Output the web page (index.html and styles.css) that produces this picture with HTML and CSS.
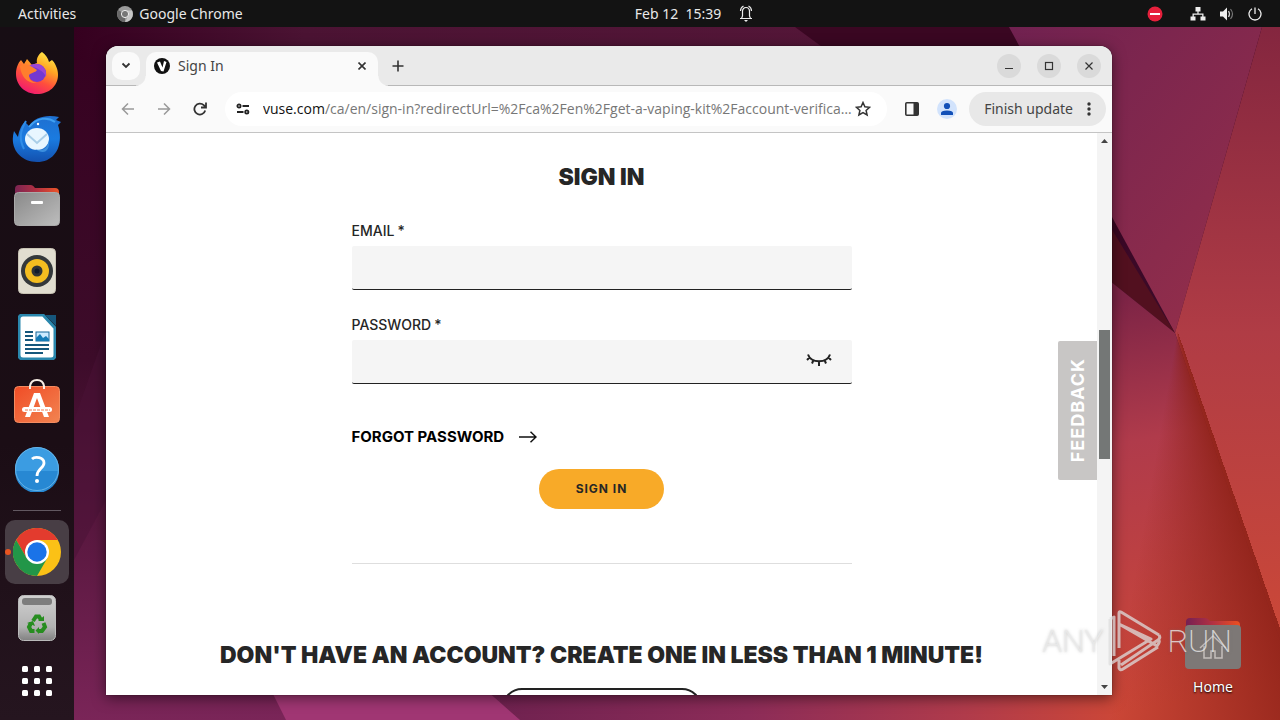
FILE: index.html
```html
<!DOCTYPE html>
<html lang="en">
<head>
<meta charset="utf-8">
<title>Sign In</title>
<link rel="stylesheet" href="styles.css">
</head>
<body>
<svg class="wallpaper" viewBox="0 0 1280 720" preserveAspectRatio="none" aria-hidden="true">
  <defs>
    <linearGradient id="base" x1="0" y1="0" x2="0" y2="1"><stop offset="0" stop-color="#35001f"/><stop offset=".5" stop-color="#3d0c2a"/><stop offset="1" stop-color="#7a2558"/></linearGradient>
    <linearGradient id="top" x1="0" y1="0" x2="1" y2="0"><stop offset="0" stop-color="#35001f"/><stop offset=".3" stop-color="#4b1333"/><stop offset="1" stop-color="#541638"/></linearGradient>
    <linearGradient id="plum" x1="0" y1="0" x2="1" y2="1"><stop offset="0" stop-color="#702150"/><stop offset="1" stop-color="#97304a"/></linearGradient>
    <linearGradient id="rose" x1="0" y1="0" x2="0" y2="1"><stop offset="0" stop-color="#84263f"/><stop offset=".5" stop-color="#b03c45"/><stop offset="1" stop-color="#cb4838"/></linearGradient>
    <linearGradient id="red" x1="1112" y1="300" x2="1190" y2="700" gradientUnits="userSpaceOnUse"><stop offset="0" stop-color="#7d2446"/><stop offset=".35" stop-color="#b03b4b"/><stop offset="1" stop-color="#cc4737"/></linearGradient>
    <linearGradient id="foot" x1="0" y1="0" x2="1" y2="0"><stop offset="0" stop-color="#702250"/><stop offset=".4" stop-color="#8c2c58"/><stop offset=".75" stop-color="#b03b4b"/><stop offset="1" stop-color="#cc4737"/></linearGradient>
  </defs>
  <rect width="1280" height="720" fill="url(#base)"/>
  <path d="M74 420L106 330V500L74 560Z" fill="#4a1236" opacity=".5"/>
  <path d="M74 0H795L840 60H74Z" fill="url(#top)"/>
  <path d="M795 27H1012L1120 220V300L840 60Z" fill="#3a0722"/>
  <path d="M1009 27H1262L1175 333L1112 217Z" fill="url(#plum)"/>
  <path d="M1262 27H1280V640L1175 333Z" fill="url(#rose)"/>
  <path d="M1100 210L1175 333L1100 273Z" fill="#52101f"/>
  <path d="M1100 273L1175 333L1280 640V720H1100Z" fill="url(#red)"/>
  <path d="M500 690H1120V720H500Z" fill="url(#foot)"/>
  <path d="M271 690H486L520 720H286Z" fill="#a03673"/>
</svg>
<div class="wallpaper fold"></div>

<header class="topbar">
  <div class="topbar-left">
    <button class="bar-button">Activities</button>
    <button class="bar-button app-menu">
      <svg width="16" height="16" viewBox="0 0 16 16"><circle cx="8" cy="8" r="8" fill="#9a9a9a"/><path d="M8 8L1.2 4A8 8 0 0 0 8 16Z" fill="#686868"/><path d="M8 4.500H15A8 8 0 0 1 8 16L11 10Z" fill="#c6c6c6"/><circle cx="8" cy="8" r="3.600" fill="#777" stroke="#eee" stroke-width="1"/></svg>
      Google Chrome
    </button>
  </div>
  <div class="topbar-clock">
    <time>Feb 12&nbsp; 15:39</time>
    <svg width="14" height="17" viewBox="0 0 14 17" fill="none" stroke="#eee" stroke-width="1.200"><path d="M1 13.500H13M2.500 13.500L3.500 11V6.500C3.500 4 5 2.500 7 2.500S10.500 4 10.500 6.500V11L11.500 13.500M1.500 6C1.500 3.500 2.500 2 4.500 1M12.500 6C12.500 3.500 11.500 2 9.500 1"/><path d="M5 15H9L7 17Z" fill="#eee" stroke="none"/></svg>
  </div>
  <div class="topbar-status">
    <svg class="stop" width="16" height="16" viewBox="0 0 16 16"><circle cx="8" cy="8" r="7.500" fill="#e6203c"/><path d="M3 7H13V9H3Z" fill="#fff"/></svg>
    <svg width="16" height="14" viewBox="0 0 16 14" fill="#eee"><path d="M5.500 0H10.500V4.500H8.600V6.500H13.500V9.500H15.500V13.500H10.500V9.500H12.200V7.700H3.800V9.500H5.500V13.500H.5V9.500H2.500V6.500H7.400V4.500H5.500Z"/></svg>
    <svg width="16" height="14" viewBox="0 0 16 14"><path d="M1 4.500H4L8 .5V13.500L4 9.500H1Z" fill="#eee"/><path d="M9.500 4Q11.500 7 9.500 10" fill="none" stroke="#ccc" stroke-width="1.300"/><path d="M11.500 2Q15.500 7 11.500 12" fill="none" stroke="#777" stroke-width="1.200"/></svg>
    <svg width="14" height="14" viewBox="0 0 14 14" fill="none" stroke="#eee" stroke-width="1.300"><path d="M7 .5V7M4 1.800A6 6 0 1 0 10 1.800"/></svg>
  </div>
</header>

<div class="workspace">
  <nav class="dock" aria-label="Dock">
    <button class="dock-item" aria-label="Firefox">
      <svg width="44" height="44" viewBox="0 0 44 44"><defs><linearGradient id="ff" x1=".8" y1="0" x2=".3" y2="1"><stop offset="0" stop-color="#fff04a"/><stop offset=".35" stop-color="#ffa524"/><stop offset=".65" stop-color="#ff4f3c"/><stop offset="1" stop-color="#f01873"/></linearGradient></defs><path d="M27 1C31 4 33 7 34 11L37 9C41 13 43 19 43 24C43 35 34 43 22 43S1 34 1 23C1 17 3 12 6 9L9 13L12 8L17 14L22 12C21 7 24 3 27 1Z" fill="url(#ff)"/><circle cx="22" cy="22" r="9" fill="#7438d2"/><path d="M14 15C22 9 33 15 31 26C28 19 22 17 14 15Z" fill="#9b45d5"/><path d="M5 15C10 12 15 14 22 19C20 22 17 21 14 24C14 29 17 31 22 32C13 33 6 26 5 15Z" fill="#ff7f2d"/></svg>
    </button>
    <button class="dock-item" aria-label="Thunderbird">
      <svg width="50" height="50" viewBox="0 0 50 50"><defs><linearGradient id="tb" x1="0" y1="0" x2="0" y2="1"><stop offset="0" stop-color="#1f6fd0"/><stop offset=".5" stop-color="#1a7be0"/><stop offset="1" stop-color="#1350ae"/></linearGradient></defs><path d="M17 12C22 3 35 0 47 3L44 6L49 8L46 11C52 30 44 48 25 48C8 48 -3 34 2 17L6 23C7 17 9 11 13 8Z" fill="url(#tb)"/><path d="M17 13C25 3 36 3 43 8" fill="none" stroke="#3fa0f2" stroke-width="2"/><path d="M14 7C8 17 7 25 12 35" fill="none" stroke="#2f8de8" stroke-width="2"/><ellipse cx="25" cy="25" rx="12" ry="11" fill="#e8f6ff"/><path d="M15 20L25 29L35 20" fill="none" stroke="#a9cee8" stroke-width="2"/><path d="M23 35C32 38 36 33 37 26C38 36 33 42 23 35Z" fill="#3c8fdf"/><circle cx="26" cy="10" r="1.200" fill="#fff"/></svg>
    </button>
    <button class="dock-item" aria-label="Files">
      <svg width="46" height="42" viewBox="0 0 46 42"><defs><linearGradient id="tabg"><stop offset="0" stop-color="#7b2452"/><stop offset=".5" stop-color="#b33142"/><stop offset="1" stop-color="#ec5529"/></linearGradient><linearGradient id="body" x1="0" y1="0" x2="1" y2="1"><stop offset="0" stop-color="#898989"/><stop offset="1" stop-color="#bdbdbd"/></linearGradient></defs><path d="M1 5Q1 1 5 1H17Q19 1 21 4H41Q45 4 45 8V20H1Z" fill="url(#tabg)"/><rect x=".5" y="8.500" width="45" height="33" rx="4" fill="url(#body)" stroke="#aaa"/><rect x="17" y="17" width="12" height="3" rx="1" fill="#fff"/></svg>
    </button>
    <button class="dock-item" aria-label="Rhythmbox">
      <svg width="38" height="46" viewBox="0 0 38 46"><rect x=".5" y=".5" width="37" height="45" rx="4" fill="#e1ddd0" stroke="#c8c3b4"/><circle cx="19" cy="23" r="16" fill="#34383b"/><circle cx="19" cy="23" r="12" fill="#f4bd20"/><circle cx="19" cy="23" r="5.500" fill="#303436"/><circle cx="19" cy="23" r="2.500" fill="#111b2c"/></svg>
    </button>
    <button class="dock-item" aria-label="LibreOffice Writer">
      <svg width="38" height="46" viewBox="0 0 38 46"><path d="M5 1H25L37 14V41Q37 45 33 45H5Q1 45 1 41V5Q1 1 5 1Z" fill="#fff" stroke="#2a87ad" stroke-width="3"/><path d="M27 1H38V12Z" fill="#16567c"/><path d="M7 18H15M7 22H15M7 26H15M7 31H31M7 35H31M7 39H25" stroke="#15577c" stroke-width="2"/><rect x="18" y="18" width="13" height="9" fill="#cceaff" stroke="#15679a"/><path d="M18 27V24L22 20L25 24L28 22L31 25V27Z" fill="#157bb6"/></svg>
    </button>
    <button class="dock-item" aria-label="Software">
      <svg width="46" height="48" viewBox="0 0 46 48"><defs><linearGradient id="sw" x1="0" y1="0" x2="1" y2="1"><stop offset="0" stop-color="#f04c26"/><stop offset="1" stop-color="#f28451"/></linearGradient></defs><rect x=".5" y="7.500" width="45" height="36" rx="4" fill="url(#sw)" stroke="#f38b61"/><path d="M16 10V7Q17 1 23 1T30 7V10" fill="none" stroke="#f8eee5" stroke-width="2"/><path d="M20 14H26L35 38H30L23 19L16 38H11Z" fill="#fff"/><rect x="8" y="28" width="30" height="5" rx="2.500" fill="#fff"/><path d="M11 31H36" stroke="#f07b50" stroke-dasharray="3 1"/></svg>
    </button>
    <button class="dock-item" aria-label="Help">
      <svg width="46" height="46" viewBox="0 0 46 46"><circle cx="23" cy="23" r="22" fill="#3b9ce2"/><path d="M1 25A22 22 0 0 0 45 25Z" fill="#2788d3"/><circle cx="23" cy="23" r="21.500" fill="none" stroke="#65b3e7"/><path d="M18 13C21 10 30 11 30 17C30 22 23 23 23 30" fill="none" stroke="#fff" stroke-width="2.800"/><circle cx="23" cy="35" r="2" fill="#fff"/></svg>
    </button>
    <hr class="dock-rule">
    <button class="dock-item" aria-label="Google Chrome">
      <span class="dock-tile">
        <svg width="48" height="48" viewBox="0 0 48 48"><circle cx="24" cy="24" r="24" fill="#fbc116"/><path d="M3.200 12A24 24 0 0 1 44.800 12H24L13.600 30Z" fill="#e33b2e"/><path d="M3.200 12A24 24 0 0 0 24 48L34.400 30H24L13.600 30Z" fill="#229648"/><circle cx="24" cy="24" r="12" fill="#fff"/><circle cx="24" cy="24" r="9.700" fill="#1a73e8"/></svg>
      </span>
    </button>
    <button class="dock-item" aria-label="Trash">
      <svg width="38" height="46" viewBox="0 0 38 46"><defs><linearGradient id="tr" x1="0" y1="0" x2="0" y2="1"><stop offset="0" stop-color="#d0d0d0"/><stop offset=".7" stop-color="#b2b2b2"/><stop offset="1" stop-color="#818181"/></linearGradient></defs><rect x=".5" y=".5" width="37" height="45" rx="5" fill="url(#tr)" stroke="#bbb"/><rect x="4" y="3" width="30" height="7" rx="3" fill="#7d7d7d"/><g fill="none" stroke="#278d20" stroke-width="4"><path d="M15 26L18 21.500H21L23 25"/><path d="M25.500 28L27 32L24 36H20"/><path d="M16.500 36H13L11 32L13 28"/></g><path d="M20 26H26V21ZM21 32V39L17.500 35.500ZM9 28L15 26L17 31Z" fill="#278d20"/></svg>
    </button>
    <button class="dock-item apps" aria-label="Show applications">
      <svg width="30" height="30" viewBox="0 0 30 30" fill="#fff"><rect width="6" height="6" rx="1.500"/><rect x="12" width="6" height="6" rx="1.500"/><rect x="24" width="6" height="6" rx="1.500"/><rect y="12" width="6" height="6" rx="1.500"/><rect x="12" y="12" width="6" height="6" rx="1.500"/><rect x="24" y="12" width="6" height="6" rx="1.500"/><rect y="24" width="6" height="6" rx="1.500"/><rect x="12" y="24" width="6" height="6" rx="1.500"/><rect x="24" y="24" width="6" height="6" rx="1.500"/></svg>
    </button>
  </nav>

  <main class="desktop">
    <section class="window">
      <div class="tabstrip">
        <button class="tab-search" aria-label="Search tabs"><svg width="10" height="7" viewBox="0 0 10 7" fill="none" stroke="#333" stroke-width="1.800"><path d="M1.500 1.500L5 5L8.500 1.500"/></svg></button>
        <div class="tab">
          <svg width="16" height="16" viewBox="0 0 16 16"><circle cx="8" cy="8" r="8" fill="#111"/><path d="M3 4.500L6 3.500L8.500 9.500L10 3L12.500 4L9.500 13.500L7 13Z" fill="#fff"/></svg>
          <span class="tab-title">Sign In</span>
          <button class="plain" aria-label="Close tab"><svg width="8" height="8" viewBox="0 0 8 8" fill="none" stroke="#333" stroke-width="1.600"><path d="M.5 .5L7.500 7.500M7.500 .5L.5 7.500"/></svg></button>
        </div>
        <button class="plain new-tab" aria-label="New tab"><svg width="12" height="12" viewBox="0 0 12 12" fill="none" stroke="#333" stroke-width="1.600"><path d="M6 .5V11.500M.5 6H11.500"/></svg></button>
        <div class="window-controls">
          <button class="control" aria-label="Minimize"><svg width="10" height="10" viewBox="0 0 10 10"><path d="M1 7.500H9" stroke="#333"/></svg></button>
          <button class="control" aria-label="Maximize"><svg width="10" height="10" viewBox="0 0 10 10"><rect x="1.500" y="1.500" width="7" height="7" fill="none" stroke="#333" stroke-width="1.200"/></svg></button>
          <button class="control" aria-label="Close"><svg width="10" height="10" viewBox="0 0 10 10"><path d="M1.500 1.500L8.500 8.500M8.500 1.500L1.500 8.500" stroke="#333" stroke-width="1.200"/></svg></button>
        </div>
      </div>

      <div class="toolbar">
        <div class="nav-buttons">
          <button class="plain" aria-label="Back"><svg width="14" height="14" viewBox="0 0 14 14" fill="none" stroke="#999" stroke-width="1.500"><path d="M13 7H1.500M7 1.500L1.500 7L7 12.500"/></svg></button>
          <button class="plain" aria-label="Forward"><svg width="14" height="14" viewBox="0 0 14 14" fill="none" stroke="#999" stroke-width="1.500"><path d="M1 7H12.500M7 1.500L12.500 7L7 12.500"/></svg></button>
          <button class="plain" aria-label="Reload"><svg width="14" height="14" viewBox="0 0 14 14" fill="none" stroke="#333" stroke-width="1.800"><path d="M12.200 8.500A5.500 5.500 0 1 1 10.800 3.200L12.500 5M13 .5V5.500H8"/></svg></button>
        </div>
        <div class="address">
          <svg class="site-info" width="14" height="12" viewBox="0 0 14 12" fill="none" stroke="#222" stroke-width="1.800"><circle cx="3" cy="3" r="1.600"/><path d="M6.500 3H13M1 9H7.500"/><circle cx="10.800" cy="9" r="1.600"/></svg>
          <span class="url"><b>vuse.com</b>/ca/en/sign-in?redirectUrl=%2Fca%2Fen%2Fget-a-vaping-kit%2Faccount-verifica…</span>
          <button class="plain" aria-label="Bookmark this tab"><svg width="16" height="16" viewBox="0 0 16 16" fill="none" stroke="#333" stroke-width="1.500"><path d="M8 1.500L9.900 5.800L14.600 6.300L11.100 9.400L12.100 14L8 11.600L3.900 14L4.900 9.400L1.400 6.300L6.100 5.800Z"/></svg></button>
        </div>
        <button class="plain panel-button" aria-label="Side panel"><svg width="14" height="14" viewBox="0 0 14 14"><rect x=".8" y=".8" width="12.400" height="12.400" rx="1" fill="none" stroke="#333" stroke-width="1.600"/><path d="M8.500 1H13V13H8.500Z" fill="#333"/></svg></button>
        <button class="plain" aria-label="Profile"><svg width="20" height="20" viewBox="0 0 20 20"><circle cx="10" cy="10" r="10" fill="#d2e3fc"/><circle cx="10" cy="7" r="3.100" fill="#1250b8"/><path d="M4 16V14Q4 11.500 10 11.500T16 14V16Z" fill="#1250b8"/></svg></button>
        <button class="update">Finish update<svg width="4" height="14" viewBox="0 0 4 14" fill="#333"><circle cx="2" cy="2" r="1.700"/><circle cx="2" cy="7" r="1.700"/><circle cx="2" cy="12" r="1.700"/></svg></button>
      </div>

      <div class="viewport">
        <div class="page">
          <form class="signin">
            <h1>SIGN IN</h1>
            <div class="field">
              <label for="email">EMAIL<span class="star">*</span></label>
              <input id="email" type="email">
            </div>
            <div class="field">
              <label for="password">PASSWORD<span class="star">*</span></label>
              <div class="password-box">
                <input id="password" type="password">
                <button class="plain reveal" type="button" aria-label="Show password"><svg width="26" height="14" viewBox="0 0 26 14" fill="none" stroke="#222" stroke-width="2"><path d="M2 1.500C5 10.500 21 10.500 24 1.500M13 8.500V13M7.500 7L6 10.500M18.500 7L20 10.500M3.500 4.500L1 7M22.500 4.500L25 7"/></svg></button>
              </div>
            </div>
            <a class="forgot" href="#forgot">FORGOT PASSWORD<svg width="18" height="12" viewBox="0 0 18 12" fill="none" stroke="#111" stroke-width="1.500"><path d="M0 6H17M11.500 .8L17 6L11.500 11.200"/></svg></a>
            <button class="submit" type="button">SIGN IN</button>
            <hr>
          </form>
          <h2>DON'T HAVE AN ACCOUNT? CREATE ONE IN LESS THAN 1 MINUTE!</h2>
          <button class="create" aria-label="Create account"></button>
        </div>
        <button class="feedback">FEEDBACK</button>
        <div class="scrollbar">
          <svg width="7" height="4" viewBox="0 0 7 4"><path d="M0 4L3.500 0L7 4Z" fill="#444"/></svg>
          <div class="track"><div class="thumb"></div></div>
          <svg width="7" height="4" viewBox="0 0 7 4"><path d="M0 0H7L3.500 4Z" fill="#444"/></svg>
        </div>
      </div>
    </section>

    <a class="home" href="#home">
      <svg width="56" height="52" viewBox="0 0 56 52"><defs><linearGradient id="hm"><stop offset="0" stop-color="#752053"/><stop offset=".5" stop-color="#b33142"/><stop offset="1" stop-color="#ec5020"/></linearGradient></defs><path d="M1 5Q1 1 5 1H20Q23 1 25 4H51Q55 4 55 8V24H1Z" fill="url(#hm)"/><rect x="0" y="8" width="56" height="44" rx="4" fill="#7d7876"/><path d="M15 31L28 19L41 31M19 29V41H26V34H30V41H37V29" fill="none" stroke="#c5bfbc" stroke-width="1.500"/></svg>
      <span>Home</span>
    </a>
    <div class="watermark">
      <span>ANY</span>
      <svg width="54" height="62" viewBox="0 0 54 62" fill="none" stroke="#ddd" stroke-opacity=".75" stroke-width="3" stroke-linejoin="round"><path d="M11 38V3Q11 1 13 2L51 25M51 25Q53 28 50 30L13 55M11 14L49 36Q53 31 50 29M2 9V54L43 29L11 14M11 50V58Q12 61 15 59L50 37M2 9L6 7V46"/></svg>
      <span>RUN</span>
    </div>
  </main>
</div>
</body>
</html>
```
FILE: styles.css
```css
* { box-sizing: border-box; }

body {
  margin: 0;
  height: 100vh;
  display: flex;
  flex-direction: column;
  overflow: hidden;
  background: #35001f;
  font-family: "Noto Sans", "Open Sans", sans-serif;
  font-size: 14px;
  line-height: 20px;
}

button {
  border: 0;
  padding: 0;
  background: none;
  font: inherit;
  color: inherit;
}

svg { display: block; flex: none; }

.wallpaper {
  position: absolute;
  inset: 0;
  width: 100%;
  height: 100%;
  z-index: -1;
}

.fold {
  background: conic-gradient(at 92% 46%, transparent 161deg, rgba(143, 34, 24, .9) 161deg, transparent 190deg);
}

.topbar {
  flex: none;
  display: grid;
  grid-template-columns: 1fr auto 1fr;
  align-items: center;
  height: 27px;
  padding: 0 18px;
  background: #131313;
  color: #e8e8e8;
}

.topbar-left { display: flex; gap: 41px; }
.app-menu { display: flex; align-items: center; gap: 6px; }
.topbar-clock { display: flex; align-items: center; gap: 18px; padding-left: 108px; }
.topbar-status { display: flex; align-items: center; justify-content: flex-end; gap: 13px; }
.stop { margin-right: 14px; }

.workspace { flex: 1; display: flex; min-height: 0; }

.dock {
  flex: none;
  width: 74px;
  padding-top: 13px;
  display: flex;
  flex-direction: column;
  background: linear-gradient(#170d14, #1b0d15 60%, #25151f);
}

.dock-item {
  position: relative;
  flex: none;
  height: 66px;
  display: flex;
  align-items: center;
  justify-content: center;
}

.apps { height: 60px; }

.dock-rule {
  width: 48px;
  height: 1px;
  margin: 8px auto;
  border: 0;
  background: #625861;
}

.dock-tile {
  width: 64px;
  height: 64px;
  display: flex;
  align-items: center;
  justify-content: center;
  border-radius: 10px;
  background: #483e45;
}

.dock-tile::before {
  content: "";
  position: absolute;
  left: 5px;
  width: 6px;
  height: 6px;
  border-radius: 3px;
  background: #e95420;
}

.desktop {
  position: relative;
  flex: 1;
  min-width: 0;
  display: flex;
  padding: 19px 168px 25px 32px;
}

.window {
  flex: 1;
  min-width: 0;
  display: flex;
  flex-direction: column;
  border-radius: 12px 12px 0 0;
  overflow: hidden;
  background: #fff;
  box-shadow: 0 3px 14px rgba(0, 0, 0, .5), 0 0 1px #000;
}

.plain { display: flex; align-items: center; justify-content: center; }

.tabstrip {
  flex: none;
  height: 40px;
  display: flex;
  align-items: center;
  padding: 0 11px 0 6px;
  background: #eaeaea;
  border-bottom: 1px solid #b8b8b8;
  color: #444;
}

.tab-search {
  width: 28px;
  height: 28px;
  display: flex;
  align-items: center;
  justify-content: center;
  border-radius: 10px;
  background: #fafafa;
}

.tab {
  position: relative;
  align-self: flex-end;
  width: 232px;
  height: 34px;
  margin: 0 0 -1px 6px;
  padding: 0 12px 6px 8px;
  display: flex;
  align-items: center;
  gap: 8px;
  border-radius: 10px 10px 0 0;
  background: #fafafa;
}

.tab::before,
.tab::after {
  content: "";
  position: absolute;
  bottom: 0;
  width: 10px;
  height: 10px;
}

.tab::before { right: 100%; background: radial-gradient(circle at 0 0, transparent 9px, #fafafa 10px); }
.tab::after { left: 100%; background: radial-gradient(circle at 100% 0, transparent 9px, #fafafa 10px); }

.tab-title { flex: 1; }
.new-tab { margin-left: 14px; }

.window-controls { display: flex; gap: 16px; margin-left: auto; }

.control {
  width: 24px;
  height: 24px;
  display: flex;
  align-items: center;
  justify-content: center;
  border-radius: 50%;
  background: #dadada;
}

.toolbar {
  flex: none;
  height: 47px;
  display: flex;
  align-items: center;
  gap: 18px;
  padding: 0 6px 0 15px;
  background: #fafafa;
  border-bottom: 1px solid #c4c4c4;
}

.nav-buttons { display: flex; gap: 22px; }

.address {
  flex: 1;
  min-width: 0;
  height: 34px;
  display: flex;
  align-items: center;
  padding: 0 16px 0 11px;
  border-radius: 17px;
  background: #fff;
  color: #777;
}

.site-info { margin-right: 13px; }
.url {
  flex: 1;
  min-width: 0;
  overflow: hidden;
  white-space: nowrap;
  font-family: "Open Sans", sans-serif;
}
.url b { font-weight: 400; color: #111; }

.update {
  height: 34px;
  margin-left: -6px;
  padding: 0 15px;
  display: flex;
  align-items: center;
  gap: 14px;
  border-radius: 17px;
  background: #e8e8e8;
  color: #444;
  white-space: nowrap;
}

.viewport {
  position: relative;
  flex: 1;
  min-height: 0;
  display: flex;
  overflow: hidden;
  font-family: Inter, sans-serif;
  color: #262626;
}

.page {
  flex: 1;
  min-width: 0;
  padding: 30px 40px 0;
  display: flex;
  flex-direction: column;
  align-items: center;
}

.signin {
  width: 100%;
  max-width: 500px;
  display: flex;
  flex-direction: column;
}

h1,
h2 {
  margin: 0;
  font-size: 23px;
  line-height: 28px;
  font-weight: 900;
  text-align: center;
}

h2 { margin-top: 77px; white-space: nowrap; }

.field { display: flex; flex-direction: column; gap: 5px; margin-top: 25px; }
h1 + .field { margin-top: 30px; }

label { font-weight: 500; }
.star { margin-left: 3px; }

input {
  width: 100%;
  height: 44px;
  padding: 0 16px;
  border: 0;
  border-bottom: 1px solid #222;
  border-radius: 2px;
  background: #f5f5f5;
  font: inherit;
}

.password-box { position: relative; }
.reveal { position: absolute; right: 20px; top: 13px; }

.forgot {
  align-self: flex-start;
  margin-top: 43px;
  display: flex;
  align-items: center;
  gap: 15px;
  font-size: 15px;
  font-weight: 700;
  color: #000;
  text-decoration: none;
}

.submit {
  align-self: center;
  width: 125px;
  height: 40px;
  margin-top: 22px;
  border-radius: 20px;
  background: #f8aa28;
  font-size: 12px;
  font-weight: 700;
  letter-spacing: 1px;
}

.signin hr {
  width: 100%;
  height: 1px;
  margin: 54px 0 0;
  border: 0;
  background: #dedede;
}

.create {
  flex: none;
  width: 200px;
  height: 40px;
  margin-top: 19px;
  border: 2px solid #222;
  border-radius: 20px;
}

.feedback {
  position: absolute;
  right: 15px;
  top: 208px;
  width: 39px;
  height: 139px;
  border-radius: 2px 0 0 2px;
  background: #c8c6c5;
  color: #fff;
  font-size: 18px;
  font-weight: 700;
  letter-spacing: 1px;
  writing-mode: sideways-lr;
}

.scrollbar {
  flex: none;
  width: 15px;
  padding: 6px 0;
  display: flex;
  flex-direction: column;
  align-items: center;
  background: #f4f4f4;
}

.track { flex: 1; width: 11px; padding-top: 187px; }
.thumb { height: 129px; background: #747776; }

.home {
  position: absolute;
  right: 35px;
  bottom: 23px;
  width: 64px;
  display: flex;
  flex-direction: column;
  align-items: center;
  gap: 8px;
  color: #fff;
  text-decoration: none;
  text-shadow: 0 1px 2px #000;
}

.watermark {
  position: absolute;
  right: 48px;
  bottom: 48px;
  display: flex;
  align-items: center;
  gap: 5px;
  font-family: Roboto, sans-serif;
  font-size: 32px;
  font-weight: 200;
  line-height: 40px;
  color: rgba(235, 235, 235, .8);
  text-shadow: 0 0 3px rgba(120, 120, 120, .5);
}
```
